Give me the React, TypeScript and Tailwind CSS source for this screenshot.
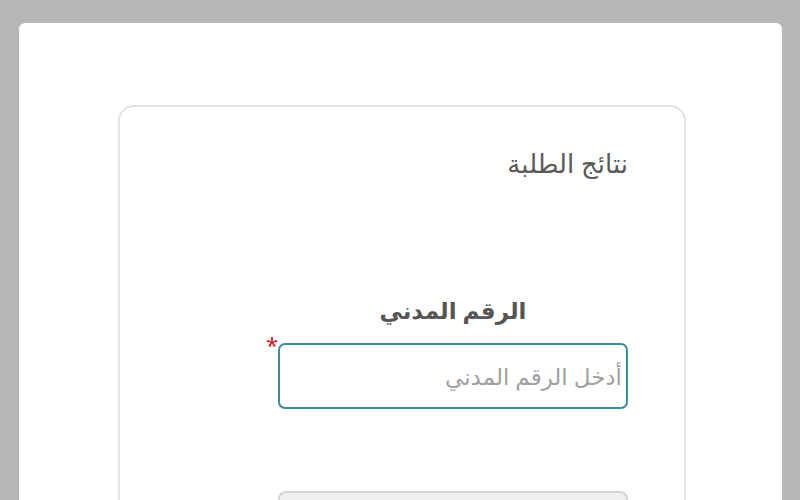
import React from 'react';

const App: React.FC = () => {
  return (
    <div
      className="w-[800px] h-[500px] overflow-hidden bg-[#b5b6b8] pt-[23px] pl-[19px] pr-[18px]"
      style={{ fontFamily: '"Noto Sans", "DejaVu Sans", sans-serif' }}
    >
      <div className="h-[500px] bg-white rounded-t-[6px] pt-[82px] pl-[99px] pr-[96px]">
        {/* Results card */}
        <div dir="rtl" className="h-[420px] border-2 border-[#e1e2e3] rounded-[16px] pr-[56px] pt-[37px] flex flex-col items-start">
          <h1 className="text-[26px] leading-[38px] text-[#5a5a5a] font-normal">نتائج الطلبة</h1>

          <div className="w-[350px] mt-[108px] flex flex-col">
            <label className="text-center text-[23px] leading-[40px] font-bold text-[#555]">الرقم المدني</label>
            <div className="relative mt-[13px]">
              <input
                type="text"
                placeholder="أدخل الرقم المدني"
                className="w-full h-[66px] border-2 border-[#3a8e9a] rounded-[7px] px-[4px] text-[23px] text-[#333] placeholder:text-[#a0a0a0] outline-none"
              />
              <span className="absolute left-[-12px] top-[-10px] text-[22px] leading-none text-[#d32222]">*</span>
            </div>
            <button
              aria-label="عرض النتيجة"
              className="mt-[82px] h-[44px] w-full bg-[#f0f0f0] border-2 border-[#d4d4d4] rounded-[8px]"
            />
          </div>
        </div>
      </div>
    </div>
  );
};

export default App;
